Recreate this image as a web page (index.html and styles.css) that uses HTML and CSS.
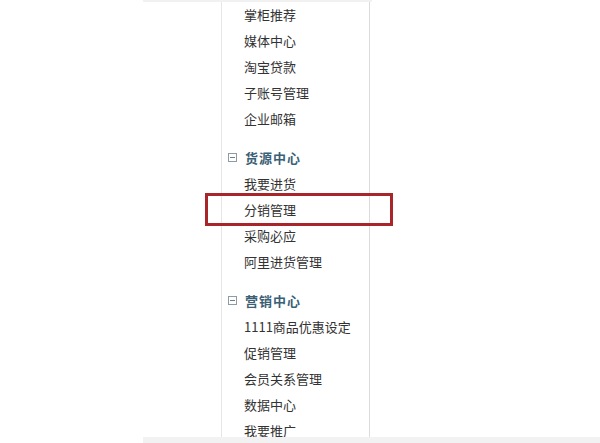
FILE: index.html
```html
<!DOCTYPE html>
<html lang="zh-CN">
<head>
    <meta charset="UTF-8">
    <title>卖家中心菜单</title>
    <link rel="stylesheet" href="styles.css">
</head>
<body>
    <div class="page">
        <div class="top-strip"></div>
        <div class="panel">
            <ul class="menu">
                <li>掌柜推荐</li>
                <li>媒体中心</li>
                <li>淘宝贷款</li>
                <li>子账号管理</li>
                <li>企业邮箱</li>
            </ul>

            <!-- 货源中心 -->
            <div class="group">
                <div class="group-title">
                    <svg class="toggle" width="9" height="9" viewBox="0 0 9 9">
                        <rect x="0.5" y="0.5" width="8" height="8" fill="none" stroke="#8d9ba5"/>
                        <line x1="2" y1="4.5" x2="7" y2="4.5" stroke="#6f7f8a"/>
                    </svg>
                    货源中心
                </div>
                <ul class="menu">
                    <li>我要进货</li>
                    <li>分销管理</li>
                    <li>采购必应</li>
                    <li>阿里进货管理</li>
                </ul>
            </div>

            <!-- 营销中心 -->
            <div class="group">
                <div class="group-title">
                    <svg class="toggle" width="9" height="9" viewBox="0 0 9 9">
                        <rect x="0.5" y="0.5" width="8" height="8" fill="none" stroke="#8d9ba5"/>
                        <line x1="2" y1="4.5" x2="7" y2="4.5" stroke="#6f7f8a"/>
                    </svg>
                    营销中心
                </div>
                <ul class="menu">
                    <li>1111商品优惠设定</li>
                    <li>促销管理</li>
                    <li>会员关系管理</li>
                    <li>数据中心</li>
                    <li>我要推广</li>
                </ul>
            </div>
        </div>
        <div class="bottom-strip"></div>
        <div class="highlight"></div>
    </div>
</body>
</html>
```

FILE: styles.css
```css
body {
    margin: 0;
    background-color: #fff;
    font-family: "Noto Sans CJK SC", "Liberation Sans", sans-serif;
    font-size: 13px;
    color: #333;
}
.page {
    position: relative;
    width: 600px;
    height: 443px;
    overflow: hidden;
}
.top-strip {
    margin-left: 143px;
    width: 229px;
    height: 2px;
    background-color: #f1f1f1;
}
.panel {
    margin-left: 221px;
    width: 147px;
    height: 435px;
    border-left: 1px solid #e6e6e6;
    border-right: 1px solid #dcdcdc;
    overflow: hidden;
}
.menu {
    list-style: none;
    margin: 0;
    padding: 0 0 0 22px;
}
.menu li {
    height: 26px;
    line-height: 26px;
    white-space: nowrap;
}
.group {
    margin-top: 12px;
}
.group-title {
    display: flex;
    align-items: center;
    height: 27px;
    padding-left: 6px;
    font-weight: bold;
    letter-spacing: 1px;
    color: #3a6075;
}
.toggle {
    margin-right: 8px;
}
.bottom-strip {
    margin-left: 143px;
    height: 6px;
    background-color: #f2f2f2;
}
.highlight {
    position: absolute;
    left: 205px;
    top: 193px;
    width: 182px;
    height: 27px;
    border: 3px solid #a8252a;
}
```
